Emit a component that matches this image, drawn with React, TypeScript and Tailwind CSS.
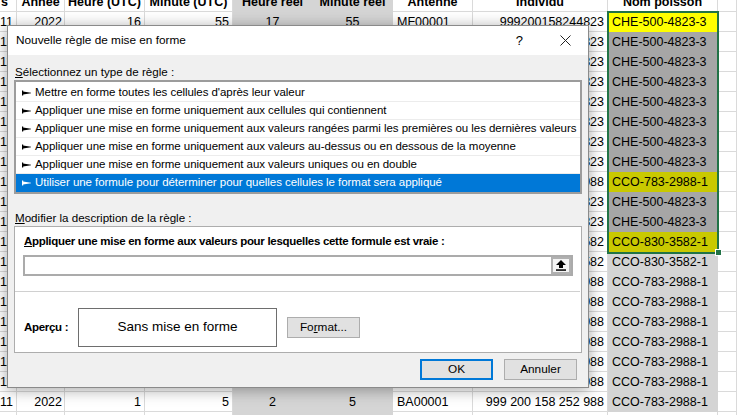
import React from 'react';

type Fill = 'none' | 'yellow' | 'olive' | 'dark' | 'light';

interface SheetRow {
  a: string;
  b: string;
  c: string;
  d: string;
  e: string;
  f: string;
  g: string;
  h: string;
  i: string;
  fill: Fill;
}

const CHE = 'CHE-500-4823-3';
const C783 = 'CCO-783-2988-1';
const C830 = 'CCO-830-3582-1';

const individu: Record<string, string> = {
  [CHE]: '999200158244823',
  [C783]: '999 200 158 252 988',
  [C830]: '999 200 158 253 582',
};

const plan: [string, Fill][] = [
  [CHE, 'yellow'],
  [CHE, 'dark'],
  [CHE, 'dark'],
  [CHE, 'dark'],
  [CHE, 'dark'],
  [CHE, 'dark'],
  [CHE, 'dark'],
  [CHE, 'dark'],
  [C783, 'olive'],
  [CHE, 'dark'],
  [CHE, 'dark'],
  [C830, 'olive'],
  [C830, 'light'],
  [C783, 'light'],
  [C783, 'light'],
  [C783, 'light'],
  [C783, 'light'],
  [C783, 'light'],
  [C783, 'light'],
  [C783, 'light'],
];

const rows: SheetRow[] = plan.map(([name, fill], idx) => {
  const last = idx === plan.length - 1;
  return {
    a: '11',
    b: '2022',
    c: last ? '1' : '16',
    d: last ? '5' : '55',
    e: last ? '2' : '17',
    f: last ? '5' : '55',
    g: last ? 'BA00001' : name === CHE ? 'MF00001' : 'BA00001',
    h: individu[name],
    i: name,
    fill,
  };
});

const fillClass: Record<Fill, string> = {
  none: 'border-[#dadada]',
  yellow: 'bg-[#ffff00] border-[#ffff00]',
  olive: 'bg-[#c9c900] border-[#c9c900]',
  dark: 'bg-[#a6a6a6] border-[#a6a6a6]',
  light: 'bg-[#d4d4d4] border-[#d4d4d4]',
};

const grey = 'bg-[#d5d5d5] border-[#d5d5d5]';
const cell = 'h-[20px] shrink-0 overflow-hidden whitespace-nowrap border-r border-b leading-[20px]';

const HeaderRow = () => (
  <div className="-mt-[8px] flex font-bold">
    <div className={`${cell} w-[17px] border-[#dadada] pl-[1px]`}>s</div>
    <div className={`${cell} w-[48px] border-[#dadada] text-center`}>Année</div>
    <div className={`${cell} w-[80px] border-[#dadada] text-center`}>Heure (UTC)</div>
    <div className={`${cell} w-[88px] border-[#dadada] text-center`}>Minute (UTC)</div>
    <div className={`${cell} w-[80px] ${grey} text-center`}>Heure réel</div>
    <div className={`${cell} w-[80px] ${grey} text-center`}>Minute réel</div>
    <div className={`${cell} w-[80px] border-[#dadada] text-center`}>Antenne</div>
    <div className={`${cell} w-[135px] border-[#dadada] text-center`}>Individu</div>
    <div className={`${cell} w-[110px] border-[#dadada] text-center`}>Nom poisson</div>
    <div className={`${cell} flex-1 border-[#dadada]`} />
  </div>
);

const DataRow = ({ r }: { r: SheetRow }) => (
  <div className="flex">
    <div className={`${cell} w-[17px] border-[#dadada] pr-[4px] text-right`}>{r.a}</div>
    <div className={`${cell} w-[48px] border-[#dadada] pr-[2px] text-right`}>{r.b}</div>
    <div className={`${cell} w-[80px] border-[#dadada] pr-[3px] text-right`}>{r.c}</div>
    <div className={`${cell} w-[88px] border-[#dadada] pr-[3px] text-right`}>{r.d}</div>
    <div className={`${cell} w-[80px] ${grey} text-center`}>{r.e}</div>
    <div className={`${cell} w-[80px] ${grey} text-center`}>{r.f}</div>
    <div className={`${cell} w-[80px] border-[#dadada] pl-[4px]`}>{r.g}</div>
    <div className={`${cell} w-[135px] border-[#dadada] pr-[3px] text-right`}>{r.h}</div>
    <div className={`${cell} w-[110px] pl-[4px] ${fillClass[r.fill]}`}>{r.i}</div>
    <div className={`${cell} flex-1 border-[#dadada]`} />
  </div>
);

const Marker = ({ color }: { color: string }) => (
  <svg width="9" height="6" viewBox="0 0 9 6" className="mr-[4px] shrink-0">
    <rect x="0" y="0.5" width="1.2" height="5" fill={color} />
    <polygon points="1,1.6 9,2.7 9,3.3 1,4.4" fill={color} />
  </svg>
);

const ruleTypes = [
  "Mettre en forme toutes les cellules d'après leur valeur",
  'Appliquer une mise en forme uniquement aux cellules qui contiennent',
  'Appliquer une mise en forme uniquement aux valeurs rangées parmi les premières ou les dernières valeurs',
  'Appliquer une mise en forme uniquement aux valeurs au-dessus ou en dessous de la moyenne',
  'Appliquer une mise en forme uniquement aux valeurs uniques ou en double',
  'Utiliser une formule pour déterminer pour quelles cellules le format sera appliqué',
];

const Dialog = () => (
  <div className="absolute left-[7px] top-[25px] w-[582px] border border-[#8a8a8a] bg-[#f0f0f0] text-[11.6px] text-black shadow-[0_2px_14px_rgba(0,0,0,0.35)] font-['Liberation_Sans',Arial,sans-serif]">
    {/* Title bar */}
    <div className="flex h-[29px] items-center bg-white pl-[8px] text-[11.8px]">
      <span>Nouvelle règle de mise en forme</span>
      <span className="ml-auto text-[13px]">?</span>
      <svg width="11" height="11" viewBox="0 0 11 11" className="ml-[37px] mr-[17px]">
        <path d="M0.5 0.5L10.5 10.5M10.5 0.5L0.5 10.5" stroke="#222" strokeWidth="1" />
      </svg>
    </div>

    <div className="px-[6px] pb-[7px]">
      <div className="mt-[9px] pl-[1px] leading-[16px]">
        <span className="underline">S</span>électionnez un type de règle :
      </div>

      {/* Rule type list */}
      <div className="border-2 border-[#9c9c9c] bg-white pt-[2px] text-[11.5px] tracking-[-0.05px]">
        {ruleTypes.map((t, idx) => {
          const selected = idx === ruleTypes.length - 1;
          return (
            <div
              key={t}
              className={`flex h-[18px] items-center whitespace-nowrap pl-[6px] ${
                selected ? 'bg-[#0078d7] text-white' : 'border-b border-[#ececec]'
              }`}
            >
              <Marker color={selected ? '#ffffff' : '#000000'} />
              {t}
            </div>
          );
        })}
      </div>

      <div className="mt-[16px] pl-[1px] leading-[16px]">
        <span className="underline">M</span>odifier la description de la règle :
      </div>

      {/* Description panel */}
      <div className="border border-[#adadad] bg-white">
        <div className="px-[8px] pb-[15px] pt-[6px]">
          <div className="pl-[1px] text-[11.5px] font-bold leading-[16px] tracking-[-0.3px]">
            <span className="underline">A</span>ppliquer une mise en forme aux valeurs pour lesquelles cette formule est vraie :
          </div>
          <div className="mt-[6px] flex h-[21px] w-[550px] justify-end border-2 border-[#ababab] bg-white">
            <div className="flex w-[20px] items-center justify-center border-2 border-[#b0b0b0] bg-[#f4f4f4]">
              <svg width="10" height="11" viewBox="0 0 10 11">
                <polygon points="5,0 10,5 7,5 7,8 3,8 3,5 0,5" fill="#000" />
                <rect x="0" y="9.3" width="10" height="1.5" fill="#000" />
              </svg>
            </div>
          </div>
        </div>
        <div className="mr-[1px] border-t border-[#d0d0d0]" />
        <div className="flex items-center px-[8px] pb-[5px] pt-[16px]">
          <span className="w-[55px] pl-[1px] text-[11.5px] font-bold tracking-[-0.3px]">Aperçu :</span>
          <div className="flex h-[39px] w-[199px] items-center justify-center border border-[#6e6e6e] text-[13.5px]">
            Sans mise en forme
          </div>
          <button className="ml-[10px] h-[21px] w-[73px] border border-[#adadad] bg-[#e1e1e1] text-[11.8px]">
            Fo<span className="underline">r</span>mat...
          </button>
        </div>
      </div>

      {/* Footer buttons */}
      <div className="mt-[6px] flex justify-end gap-[11px] pr-[5px]">
        <button className="h-[21px] w-[73px] border-2 border-[#0078d7] bg-[#e1e1e1] text-[11.8px]">OK</button>
        <button className="h-[21px] w-[73px] border border-[#adadad] bg-[#e1e1e1] text-[11.8px]">Annuler</button>
      </div>
    </div>
  </div>
);

export default function App() {
  return (
    <div className="relative h-[415px] w-[737px] overflow-hidden bg-white text-[12.5px] text-black font-['Liberation_Sans',Arial,sans-serif]">
      <HeaderRow />
      {rows.map((r, idx) => (
        <DataRow key={idx} r={r} />
      ))}
      <DataRow
        r={{ a: '11', b: '2022', c: '1', d: '5', e: '2', f: '5', g: 'BA00001', h: '999 200 158 252 988', i: '', fill: 'none' }}
      />

      {/* Selected range on Nom poisson */}
      <div className="pointer-events-none absolute left-[607px] top-[11px] h-[243px] w-[112px] border-2 border-[#217346]" />
      <div className="absolute left-[715px] top-[249px] h-[7px] w-[7px] border border-white bg-[#217346]" />

      <Dialog />
    </div>
  );
}
